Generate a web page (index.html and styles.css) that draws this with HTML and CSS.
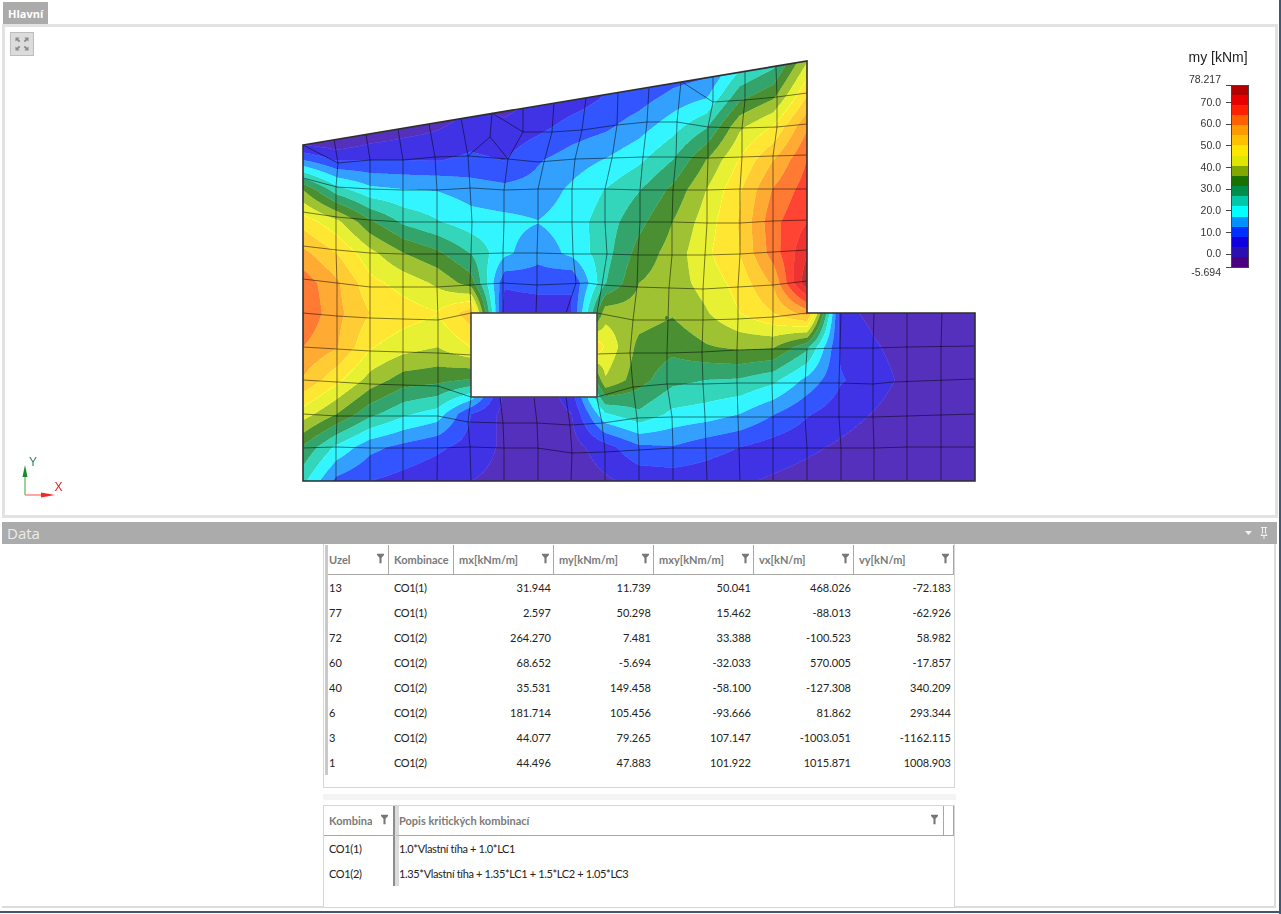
FILE: index.html
```html
<!DOCTYPE html>
<html lang="cs">
<head>
<meta charset="utf-8">
<title>Hlavní</title>
<link rel="stylesheet" href="styles.css">
</head>
<body>
<svg class="defs" width="0" height="0" aria-hidden="true">
  <symbol id="funnel" viewBox="0 0 8 11"><path d="M0 0h8v1.6L5.2 4.6V11H2.8V4.6L0 1.6z"/></symbol>
</svg>
<div class="tabstrip"><div class="tab">Hlavní</div></div>
<main class="viewport-frame">
  <div class="viewport">
    <button class="fit-btn" aria-label="Přizpůsobit">
      <svg width="18" height="18" viewBox="0 0 18 18">
        <path class="fit-dark" d="M1 1h5L4.500 2.800 7 5.300 5.300 7 2.800 4.500 1 6zM17 1v5l-1.800-1.500L12.700 7 11 5.300l2.500-2.500L12 1zM1 17v-5l1.800 1.500L5.300 11 7 12.700l-2.500 2.500L6 17zM17 17h-5l1.500-1.800L11 12.700l1.700-1.700 2.500 2.500L17 12z"/>
      </svg>
    </button>
    <canvas id="contour" class="contour" width="672" height="420"></canvas>
    <svg class="plot" viewBox="5 27 1268 487" width="1268" height="487">
      <g class="mesh">
        <polyline points="303,448 336,447 370,448 403,448 437,448 470,447 504,448 537,448 572,453 605,452 639,450 673,448 706,448 739,448 773,448 807,448 841,448 874,448 907,447 975,447"/>
        <polyline points="303,414 337,416 370,416 403,416 438,416 468,422 503,423 537,423 570,425 603,423 637,418 672,417 705,417 738,417 773,417 805,417 839,417 873,417 907,416 975,414"/>
        <polyline points="303,380 337,382 370,384 403,385 438,386 471,397"/>
        <polyline points="597,397 633,387 667,384 703,384 737,383 772,383 805,383 839,383 873,384 893,382 975,379"/>
        <polyline points="303,347 337,349 370,351 403,352 438,353 471,355"/>
        <polyline points="597,354 630,353 667,353 702,352 737,350 772,349 807,349 840,348 873,348 907,347 975,346"/>
        <polyline points="303,313 337,316 370,318 403,319 438,320 471,313"/>
        <polyline points="597,313 633,320 668,320 703,320 738,319 773,317 807,313"/>
        <polyline points="303,279 337,283 370,287 403,287 437,287 470,285 503,283 537,285 587,283 602,285 637,287 670,288 703,289 738,287 773,285 807,281"/>
        <polyline points="303,246 337,250 370,253 403,254 437,254 470,254 503,253 538,253 573,254 607,254 638,255 672,255 705,255 740,254 773,252 807,250"/>
        <polyline points="303,212 337,217 370,220 403,222 437,222 472,222 505,222 538,222 572,222 605,222 640,222 673,222 707,223 740,223 773,221 807,220"/>
        <polyline points="303,178 337,187 370,189 403,190 437,190 472,188 505,190 538,189 573,189 605,189 640,190 673,190 707,190 740,189 773,189 807,189"/>
        <polyline points="303,145 338,163 370,160 403,160 435,157 468,156 508,159 538,162 575,159 612,158 643,157 677,157 708,158 742,157 773,156 807,155"/>
        <polyline points="523,132 552,132 582,130 617,125 647,122 677,122 708,127 742,128 777,127 807,124"/>
        <polyline points="682,82 713,102 745,100 777,97 807,93"/>
        <polyline points="334,139 338,163 336,187 336,217 336,250 337,283 337,316 337,349 337,382 337,416 336,447 336,481"/>
        <polyline points="366,134 370,160 370,189 370,220 370,253 370,287 370,481"/>
        <polyline points="398,129 403,160 403,481"/>
        <polyline points="429,124 435,157 437,190 437,287 438,320 438,416 437,481"/>
        <polyline points="461,118 468,156 470,188 472,222 471,254 470,285 471,313"/>
        <polyline points="471,397 468,422 470,447 471,481"/>
        <polyline points="492,113 490,137 468,156"/>
        <polyline points="490,137 508,159"/>
        <polyline points="492,113 523,132 508,159 504,190 504,222 503,253 503,283 503,313"/>
        <polyline points="523,108 523,132"/>
        <polyline points="554,103 552,132 544,162 538,189 538,222 537,253 537,285 536,313"/>
        <polyline points="500,397 503,423 504,448 504,481"/>
        <polyline points="534,397 537,423 538,448 538,481"/>
        <polyline points="586,98 582,130 575,159 572,189 572,222 573,254 576,283 566,313"/>
        <polyline points="566,397 570,425 572,453 571,481"/>
        <polyline points="618,93 617,125 612,158 605,189 605,222 607,254 602,285 597,313"/>
        <polyline points="597,398 602,423 605,452 605,480"/>
        <polyline points="649,87 647,122 643,157 640,190 640,222 638,255 637,287 633,320 630,353 633,387 637,418 639,450 639,481"/>
        <polyline points="681,82 677,122 676,157 673,190 672,222 672,255 669,288 668,320 667,353 667,384 672,417 673,448 673,481"/>
        <polyline points="713,77 713,102 708,127 708,158 707,190 707,223 705,255 703,289 703,320 702,352 703,384 705,417 706,448 707,481"/>
        <polyline points="745,72 745,100 742,128 742,157 740,189 740,223 740,254 738,287 738,319 737,350 737,383 738,417 739,448 740,481"/>
        <polyline points="776,67 777,97 777,127 773,156 773,189 773,221 773,252 773,285 773,317 772,349 772,383 773,417 773,448 773,481"/>
        <polyline points="807,349 805,383 805,417 807,448 807,481"/>
        <polyline points="841,313 840,348 839,383 839,417 841,448 841,481"/>
        <polyline points="874,313 873,348 873,384 873,417 874,448 874,481"/>
        <polyline points="907,313 907,347 907,416 907,481"/>
        <polyline points="942,313 941,347 941,481"/>
      </g>
      <circle class="mesh-dot" cx="667" cy="318" r="2"/>
      <polygon class="outline" points="303,145 807,61 807,313 975,313 975,481 303,481"/>
      <rect class="hole" x="471" y="313" width="126" height="84"/>

      <g class="axes">
        <path class="axis-y" d="M25 495V472"/>
        <path class="arrow-y" d="M25 465l-2.500 12h5z"/>
        <path class="axis-x" d="M25 495H48"/>
        <path class="arrow-x" d="M55 495l-14-2.500v5z"/>
        <text class="label-y" x="29" y="466">Y</text>
        <text class="label-x" x="54.500" y="490.500">X</text>
      </g>

      <g class="legend">
        <text class="legend-title" x="1188.500" y="62">my [kNm]</text>
        <rect class="sw" x="1231" y="85" width="17" height="11" fill="#b30000"/>
        <rect class="sw" x="1231" y="95" width="17" height="11" fill="#e60000"/>
        <rect class="sw" x="1231" y="105" width="17" height="11" fill="#ff2000"/>
        <rect class="sw" x="1231" y="115" width="17" height="11" fill="#ff6000"/>
        <rect class="sw" x="1231" y="125" width="17" height="11" fill="#ff9900"/>
        <rect class="sw" x="1231" y="135" width="17" height="11" fill="#ffc000"/>
        <rect class="sw" x="1231" y="145" width="17" height="11" fill="#ffe600"/>
        <rect class="sw" x="1231" y="156" width="17" height="11" fill="#e0e600"/>
        <rect class="sw" x="1231" y="166" width="17" height="11" fill="#80a800"/>
        <rect class="sw" x="1231" y="176" width="17" height="11" fill="#1a7000"/>
        <rect class="sw" x="1231" y="186" width="17" height="11" fill="#008c4a"/>
        <rect class="sw" x="1231" y="196" width="17" height="11" fill="#00c8a8"/>
        <rect class="sw" x="1231" y="206" width="17" height="12" fill="#00ffff"/>
        <rect class="sw" x="1231" y="217" width="17" height="11" fill="#0090ff"/>
        <rect class="sw" x="1231" y="227" width="17" height="11" fill="#0030ff"/>
        <rect class="sw" x="1231" y="237" width="17" height="11" fill="#1000e0"/>
        <rect class="sw" x="1231" y="247" width="17" height="11" fill="#2a10b0"/>
        <rect class="sw" x="1231" y="257" width="17" height="10" fill="#4b0082"/>
        <rect class="legend-box" x="1231.500" y="85.500" width="17" height="182"/>
        <path class="ticks" d="M1226 85.500h5M1226 102.500h5M1226 124.500h5M1226 145.500h5M1226 167.500h5M1226 189.500h5M1226 210.500h5M1226 232.500h5M1226 254.500h5M1226 267.500h5"/>
        <g class="legend-values">
          <text x="1221" y="83">78.217</text>
          <text x="1221" y="106">70.0</text>
          <text x="1221" y="127">60.0</text>
          <text x="1221" y="149">50.0</text>
          <text x="1221" y="171">40.0</text>
          <text x="1221" y="192">30.0</text>
          <text x="1221" y="214">20.0</text>
          <text x="1221" y="236">10.0</text>
          <text x="1221" y="257">0.0</text>
          <text x="1221" y="276">-5.694</text>
        </g>
      </g>
    </svg>
  </div>
</main>
<header class="data-bar">
  <span class="data-title">Data</span>
  <svg class="bar-icons" width="26" height="12" viewBox="0 0 26 12">
    <path class="bar-arrow" d="M0 4h7L3.500 8z"/>
    <path class="bar-pin" d="M16 .500h6M17.500 .500v6l-1.500 2h6l-1.500-2v-6M19 8.500V12"/>
  </svg>
</header>
<section class="data-body">
  <div class="grid-frame nodes">
    <table class="grid">
      <colgroup><col class="c-uzel"><col class="c-komb"><col class="c-val"><col class="c-val"><col class="c-val"><col class="c-val"><col class="c-val"></colgroup>
      <thead>
        <tr>
          <th><div class="th-in"><span>Uzel</span><svg class="funnel"><use href="#funnel"/></svg></div></th>
          <th><div class="th-in"><span>Kombinace</span></div></th>
          <th><div class="th-in"><span>mx[kNm/m]</span><svg class="funnel"><use href="#funnel"/></svg></div></th>
          <th><div class="th-in"><span>my[kNm/m]</span><svg class="funnel"><use href="#funnel"/></svg></div></th>
          <th><div class="th-in"><span>mxy[kNm/m]</span><svg class="funnel"><use href="#funnel"/></svg></div></th>
          <th><div class="th-in"><span>vx[kN/m]</span><svg class="funnel"><use href="#funnel"/></svg></div></th>
          <th><div class="th-in"><span>vy[kN/m]</span><svg class="funnel"><use href="#funnel"/></svg></div></th>
        </tr>
      </thead>
      <tbody>
        <tr><td class="first">13</td><td class="txt">CO1(1)</td><td class="num">31.944</td><td class="num">11.739</td><td class="num">50.041</td><td class="num">468.026</td><td class="num">-72.183</td></tr>
        <tr><td class="first">77</td><td class="txt">CO1(1)</td><td class="num">2.597</td><td class="num">50.298</td><td class="num">15.462</td><td class="num">-88.013</td><td class="num">-62.926</td></tr>
        <tr><td class="first">72</td><td class="txt">CO1(2)</td><td class="num">264.270</td><td class="num">7.481</td><td class="num">33.388</td><td class="num">-100.523</td><td class="num">58.982</td></tr>
        <tr><td class="first">60</td><td class="txt">CO1(2)</td><td class="num">68.652</td><td class="num">-5.694</td><td class="num">-32.033</td><td class="num">570.005</td><td class="num">-17.857</td></tr>
        <tr><td class="first">40</td><td class="txt">CO1(2)</td><td class="num">35.531</td><td class="num">149.458</td><td class="num">-58.100</td><td class="num">-127.308</td><td class="num">340.209</td></tr>
        <tr><td class="first">6</td><td class="txt">CO1(2)</td><td class="num">181.714</td><td class="num">105.456</td><td class="num">-93.666</td><td class="num">81.862</td><td class="num">293.344</td></tr>
        <tr><td class="first">3</td><td class="txt">CO1(2)</td><td class="num">44.077</td><td class="num">79.265</td><td class="num">107.147</td><td class="num">-1003.051</td><td class="num">-1162.115</td></tr>
        <tr><td class="first">1</td><td class="txt">CO1(2)</td><td class="num">44.496</td><td class="num">47.883</td><td class="num">101.922</td><td class="num">1015.871</td><td class="num">1008.903</td></tr>
      </tbody>
    </table>
  </div>
  <div class="splitter"></div>
  <div class="grid-frame combos">
    <table class="grid">
      <colgroup><col class="c-k2"><col class="c-popis"><col class="c-rest"></colgroup>
      <thead>
        <tr>
          <th><div class="th-in"><span class="clip">Kombinace</span><svg class="funnel"><use href="#funnel"/></svg></div></th>
          <th class="split"><div class="th-in"><span>Popis kritických kombinací</span><svg class="funnel"><use href="#funnel"/></svg></div></th>
          <th class="end"></th>
        </tr>
      </thead>
      <tbody>
        <tr><td class="k2 txt">CO1(1)</td><td class="split txt">1.0*Vlastní tíha + 1.0*LC1</td><td class="blank"></td></tr>
        <tr><td class="k2 txt">CO1(2)</td><td class="split txt">1.35*Vlastní tíha + 1.35*LC1 + 1.5*LC2 + 1.05*LC3</td><td class="blank"></td></tr>
      </tbody>
    </table>
  </div>
</section>
<footer class="window-edge"></footer>
<script src="contour.js"></script>
</body>
</html>
```

FILE: styles.css
```css
* { box-sizing: border-box; }
html, body { margin: 0; padding: 0; }
body {
  width: 1281px;
  height: 914px;
  overflow: hidden;
  background: #fff;
  font-family: Lato, "Liberation Sans", sans-serif;
  display: flex;
  flex-direction: column;
  border-right: 2px solid #3d5873;
}
.defs { position: absolute; }

.tabstrip { height: 24px; padding: 2px 0 0 3px; flex: none; }
.tab {
  width: 45px;
  height: 22px;
  background: #ababab;
  color: #fff;
  font-family: "Open Sans", sans-serif;
  font-size: 11px;
  font-weight: 700;
  line-height: 23px;
  padding-left: 5px;
}

.viewport-frame {
  flex: none;
  height: 494px;
  margin: 0 1px 0 2px;
  border: 3px solid #e2e2e2;
  background: #e2e2e2;
  padding: 0;
}
.viewport { position: relative; height: 488px; background: #fff; overflow: hidden; border-left: 1px solid #fff; }

.fit-btn {
  position: absolute;
  left: 4px;
  top: 5px;
  width: 24px;
  height: 24px;
  padding: 2px;
  background: #dcdcdc;
  border: 1px solid #bdbdbd;
  display: flex;
  align-items: center;
  justify-content: center;
}
.fit-dark { fill: #8b8b8b; transform: scale(.82); transform-origin: 9px 9px; }

.contour {
  position: absolute;
  left: 297px;
  top: 34px;
  clip-path: polygon(evenodd, 0 84px, 504px 0, 504px 252px, 672px 252px, 672px 420px, 0 420px, 0 84px, 168px 252px, 168px 336px, 294px 336px, 294px 252px, 168px 252px, 0 84px);
}
.plot { position: absolute; left: -1px; top: 0; }

.mesh polyline { fill: none; stroke: #000; stroke-opacity: .5; stroke-width: 1; }
.mesh-dot { fill: #3b7d3b; }
.outline { fill: none; stroke: #2e2e2e; stroke-width: 1.6; stroke-linejoin: miter; }
.hole { fill: #fff; stroke: #444; stroke-width: 1.6; }

.axis-y { stroke: #7fc27f; stroke-width: 1.5; fill: none; }
.arrow-y { fill: #1a8a2a; }
.axis-x { stroke: #ff8a8a; stroke-width: 1.5; fill: none; }
.arrow-x { fill: #f02a2a; }
.label-y { font: 12px "Liberation Sans", sans-serif; fill: #2f7f6a; }
.label-x { font: 12px "Liberation Sans", sans-serif; fill: #f01818; }

.legend-title { font: 14px "Liberation Sans", sans-serif; fill: #222; }
.legend-box { fill: none; stroke: #444; stroke-width: 1; }
.ticks { stroke: #444; stroke-width: 1; fill: none; }
.legend-values text { font: 10.5px "Liberation Sans", sans-serif; fill: #333; text-anchor: end; }

.data-bar {
  flex: none;
  height: 22px;
  margin: 4px 2px 0 2px;
  background: #ababab;
  display: flex;
  align-items: center;
  justify-content: space-between;
  padding: 0 6px 0 5px;
}
.data-title { color: #ececec; font-family: "Open Sans", sans-serif; font-size: 15px; line-height: 22px; }
.bar-arrow { fill: #f2f2f2; }
.bar-pin { fill: none; stroke: #f2f2f2; stroke-width: 1; }

.data-body {
  flex: none;
  height: 364px;
  margin: 0 3px 0 2px;
  border-bottom: 2px solid #dcdcdc;
  border-right: 2px solid #dcdcdc;
  padding-left: 321px;
  display: flex;
  flex-direction: column;
}
.grid-frame { width: 632px; border: 1px solid #d6d6d6; background: #fff; flex: none; }
.nodes { height: 244px; border-top: 0; padding: 1px 0 0 1px; }
.combos { height: 103px; padding: 0; }
.splitter { width: 633px; height: 6px; margin: 6px 0 5px; background: #f4f4f4; flex: none; }

.grid { border-collapse: separate; border-spacing: 0; table-layout: fixed; font-size: 11px; color: #222; }
.nodes .grid { width: 629px; border-left: 3px solid #c9c9c9; }
.combos .grid { width: 630px; }
.c-uzel { width: 61px; }
.c-komb { width: 65px; }
.c-val { width: 100px; }
.c-k2 { width: 71px; }
.c-popis { width: 549px; }
.c-rest { width: 10px; }

.grid th {
  height: 30px;
  padding: 0;
  text-align: left;
  font-weight: 700;
  color: #7a7a7a;
  border-bottom: 1px solid #a8a8a8;
  border-right: 1px solid #a8a8a8;
}
.th-in { display: flex; align-items: center; justify-content: space-between; padding: 0 4px 0 5px; height: 29px; white-space: nowrap; overflow: hidden; }
.nodes th:first-child .th-in { padding-left: 1px; }
.funnel { width: 7px; height: 11px; fill: #777; flex: none; margin-top: -2px; }
.clip { overflow: hidden; width: 43px; display: block; }

.combos th { height: 30px; }
.combos th:first-child { border-right: 2px solid #8d8d8d; }
.combos th.split { border-left: 4px solid #dcdcdc; }
.combos .th-in { padding-left: 5px; padding-right: 5px; }
.combos th.split .th-in { padding-left: 0; }
.combos th.end { border-right: 1px solid #a8a8a8; }

.grid td { height: 25px; padding: 0 0 0 5px; white-space: nowrap; }
.grid td.txt { letter-spacing: -.35px; }
.nodes td.first { padding-left: 1px; }
.grid td.num { text-align: right; padding: 0 3px 0 0; }
.combos td { padding-left: 5px; }
.combos td.k2 { border-right: 2px solid #8d8d8d; }
.combos td.split { border-left: 4px solid #dcdcdc; padding-left: 0; }
.combos td.blank { padding: 0; }

.window-edge { flex: none; height: 2px; margin-top: 3px; background: #3d5873; }
```

FILE: contour.js
```js
// Banded contour plot of my [kNm]: node values on the mesh, in colour-band units.
(function () {
  var ys = [61, 94, 127, 160, 190, 222, 253, 283, 313, 347, 380, 414, 447, 481];
  var V = [
    [-2, -1.5, -.5, 0, .5, 1.2, 1, 1.4, 1.8, 2.2, 2.2, 3, 3.2, 5.4, 6.5, 9.9],
    [-1.5, -1, 0, .5, .9, 1.8, 1.5, 1.9, 2.3, 3, 3.4, 4.2, 4.7, 7.5, 8.6, 11.9],
    [-.4, 0, 1, 1.5, 1.9, 2.4, 2.2, 2.7, 3.4, 3.8, 4.55, 5.6, 6.9, 9.8, 11.1, 13.9],
    [4, 2.9, 3, 3, 2.95, 3.2, 2.98, 3.9, 4.5, 5.05, 5.8, 7, 9, 11.1, 13, 15],
    [9, 6.5, 5.3, 5.05, 4.95, 4.55, 4.3, 4.4, 5.2, 6.05, 6.95, 8.25, 10, 11.9, 14.1, 15.5],
    [11.6, 10.3, 8.2, 6.8, 6.1, 5.45, 5.3, 5.03, 5.5, 6.5, 7.7, 9, 10.5, 12.1, 14.7, 16],
    [13.3, 12, 10.3, 9, 8.2, 6.95, 5.25, 4.3, 5.3, 6.6, 8.4, 9.4, 10.8, 12, 14.5, 16.9],
    [14.6, 13.2, 11.3, 10.6, 9.8, 8.5, 3.2, 3.5, 3, 6.95, 9, 9.5, 10.4, 11.4, 13.2, 17.8],
    [14.9, 13.3, 12, 11.5, 11.05, 12.6, 2.2, 2.2, 3, 9.6, 9.5, 9.1, 9.9, 11, 12, 13.5, 2.3, 1.75, 1.4, 1.3, 1.25],
    [14, 13.1, 11.1, 10.4, 10, 11, 5, 5, 14.5, 10.8, 8.7, 8.3, 8.9, 9.2, 9.1, 7.3, 2.8, 2.1, 1.6, 1.4, 1.3],
    [12.9, 11.3, 9.6, 8.5, 8.3, 7.9, 1.7, 1.2, 3, 9.9, 8.4, 7.3, 7, 6.9, 6.3, 4.7, 3.1, 2.4, 1.75, 1.45, 1.3],
    [10.5, 9, 7.3, 6.2, 5.55, 3, 1.7, 1.2, 2, 5.9, 6.8, 5.75, 5.5, 5, 4.05, 3.1, 2.4, 1.95, 1.5, 1.35, 1.3],
    [7.9, 5.8, 4.3, 3.7, 3.2, 2.6, 1.8, 1.4, 1.6, 2.6, 3.8, 3.95, 3.4, 3, 2.55, 2.2, 1.85, 1.5, 1.3, 1.2, 1.2],
    [6.3, 3.7, 3, 2.65, 2.3, 2, 1.7, 1.4, 1.3, 1.85, 2.3, 2.4, 2.4, 2.15, 1.85, 1.6, 1.4, 1.3, 1.2, 1.2, 1.2]
  ];
  V.forEach(function (r) { while (r.length < 21) r.push(r[r.length - 1]); });
  var bands = [
    [110, 51, 160], [85, 48, 189], [64, 51, 230], [51, 85, 255], [51, 160, 255], [51, 245, 255],
    [51, 214, 187], [51, 165, 108], [74, 144, 51], [159, 194, 51], [232, 240, 51], [255, 230, 51],
    [255, 204, 51], [255, 170, 51], [255, 122, 51], [255, 68, 51], [238, 51, 51], [187, 51, 51]
  ];
  var X0 = 303, Y0 = 61, DX = 33.6, W = 672, H = 420;
  function band(x, y) {
    var i = Math.min(19, Math.max(0, Math.floor((x - X0) / DX)));
    var j = 0;
    while (j < ys.length - 2 && y >= ys[j + 1]) j++;
    var u = (x - (X0 + i * DX)) / DX, v = (y - ys[j]) / (ys[j + 1] - ys[j]);
    var t = V[j][i] * (1 - u) * (1 - v) + V[j][i + 1] * u * (1 - v) +
            V[j + 1][i] * (1 - u) * v + V[j + 1][i + 1] * u * v;
    return Math.max(0, Math.min(17, Math.floor(t)));
  }
  var ctx = document.getElementById("contour").getContext("2d");
  var img = ctx.createImageData(W, H), d = img.data;
  for (var py = 0; py < H; py++) {
    for (var px = 0; px < W; px++) {
      var r = 0, g = 0, b = 0, first = -1, mixed = false;
      for (var sy = 0; sy < 3; sy++) {
        for (var sx = 0; sx < 3; sx++) {
          var k = band(X0 + px + (sx + .5) / 3, Y0 + py + (sy + .5) / 3);
          if (first < 0) first = k; else if (k !== first) mixed = true;
          r += bands[k][0]; g += bands[k][1]; b += bands[k][2];
        }
      }
      var glow = mixed ? 14 : 0, o = (py * W + px) * 4;
      d[o] = r / 9 + glow; d[o + 1] = g / 9 + glow; d[o + 2] = b / 9 + glow; d[o + 3] = 255;
    }
  }
  ctx.putImageData(img, 0, 0);
})();
```
